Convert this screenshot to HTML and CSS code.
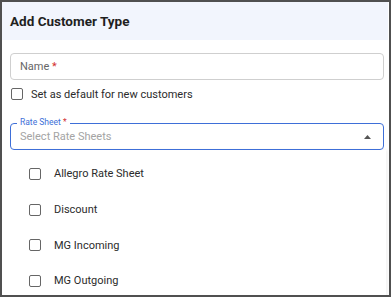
FILE: index.html
```html
<!DOCTYPE html>
<html lang="en">

<head>
    <meta charset="UTF-8">
    <meta name="viewport" content="width=device-width, initial-scale=1.0">
    <title>Add Customer Type</title>
    <link rel="stylesheet" href="styles.css">
</head>

<body>
    <main class="dialog" aria-labelledby="dialog-title">
        <header class="dialog-header">
            <h1 class="dialog-title" id="dialog-title">Add Customer Type</h1>
        </header>

        <section class="dialog-body">
            <div class="text-field">
                <span class="field-placeholder">Name <span class="req">*</span></span>
            </div>

            <label class="check-row">
                <span class="checkbox"></span>
                <span class="check-text">Set as default for new customers</span>
            </label>

            <div class="select-field">
                <span class="select-label">Rate Sheet <span class="req">*</span></span>
                <span class="select-placeholder">Select Rate Sheets</span>
                <svg class="select-arrow" width="7" height="4" viewBox="0 0 7 4" aria-hidden="true">
                    <path d="M0 4 L3.5 0 L7 4 Z" fill="#555"/>
                </svg>
            </div>

            <ul class="option-list" role="listbox">
                <li class="option"><span class="checkbox"></span>Allegro Rate Sheet</li>
                <li class="option"><span class="checkbox"></span>Discount</li>
                <li class="option"><span class="checkbox"></span>MG Incoming</li>
                <li class="option"><span class="checkbox"></span>MG Outgoing</li>
            </ul>
        </section>
    </main>
</body>

</html>
```

FILE: styles.css
```css
* {
    margin: 0;
    padding: 0;
    box-sizing: border-box;
    font-family: 'Roboto', 'Liberation Sans', sans-serif;
}

body {
    background-color: #fff;
}

.dialog {
    width: 391px;
    height: 297px;
    border: 2px solid #505050;
    background-color: #fff;
    overflow: hidden;
    display: flex;
    flex-direction: column;
}

.dialog-header {
    height: 38px;
    flex-shrink: 0;
    background-color: #f2f5fd;
    padding: 0 8px;
    margin-right: 1px;
    display: flex;
    align-items: center;
}

.dialog-title {
    font-size: 13.5px;
    font-weight: bold;
    color: #1f1f1f;
}

.dialog-body {
    padding: 13px 5px 0 8px;
    display: flex;
    flex-direction: column;
}

.text-field {
    height: 27px;
    flex-shrink: 0;
    border: 1px solid #cfcfcf;
    border-radius: 4px;
    padding: 0 9px;
    display: flex;
    align-items: center;
}

.field-placeholder {
    font-size: 11px;
    color: #666;
}

.req {
    color: #d32f2f;
}

.check-row {
    display: flex;
    align-items: center;
    gap: 8px;
    height: 14px;
    margin-top: 7px;
    padding-left: 1px;
    font-size: 11px;
    color: #2b2b2b;
}

.checkbox {
    width: 12px;
    height: 12px;
    border: 1.5px solid #666;
    border-radius: 2px;
    flex-shrink: 0;
}

.select-field {
    position: relative;
    height: 27px;
    flex-shrink: 0;
    margin-top: 22px;
    border: 1.5px solid #3e6fd8;
    border-radius: 4px;
    padding: 0 9px;
    display: flex;
    align-items: center;
    justify-content: space-between;
}

.select-label {
    position: absolute;
    top: -7px;
    left: 6px;
    padding: 0 3px;
    background-color: #fff;
    font-size: 8.5px;
    color: #3e6fd8;
}

.select-placeholder {
    font-size: 11px;
    color: #a4a4a4;
}

.select-arrow {
    margin-right: 3px;
}

.option-list {
    list-style: none;
    margin-right: -2px;
    box-shadow: 2px 0 3px rgba(0, 0, 0, 0.05);
    padding-top: 6px;
}

.option {
    height: 35.7px;
    display: flex;
    align-items: center;
    gap: 13px;
    padding-left: 19px;
    font-size: 11px;
    color: #2b2b2b;
}
```
